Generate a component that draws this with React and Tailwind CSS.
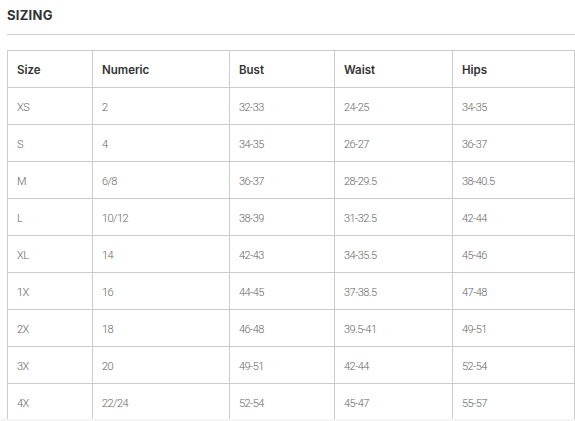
const rows = [
  ['XS', '2', '32-33', '24-25', '34-35'],
  ['S', '4', '34-35', '26-27', '36-37'],
  ['M', '6/8', '36-37', '28-29.5', '38-40.5'],
  ['L', '10/12', '38-39', '31-32.5', '42-44'],
  ['XL', '14', '42-43', '34-35.5', '45-46'],
  ['1X', '16', '44-45', '37-38.5', '47-48'],
  ['2X', '18', '46-48', '39.5-41', '49-51'],
  ['3X', '20', '49-51', '42-44', '52-54'],
  ['4X', '22/24', '52-54', '45-47', '55-57'],
]

const headers = ['Size', 'Numeric', 'Bust', 'Waist', 'Hips']

export default function App() {
  return (
    <div className="h-[421px] bg-[#f4f4f4] overflow-hidden" style={{ fontFamily: 'Roboto, "Liberation Sans", sans-serif' }}>
      <div className="h-[419px] bg-white overflow-hidden pl-[7px]">
        <div className="h-[34px] pt-[6px] text-[13px] font-bold tracking-[0.02em] text-[#333]" style={{ fontFamily: 'Inter, sans-serif' }}>
          SIZING
        </div>
        <div className="h-px bg-[#cfcfcf]" />
        <div className="mt-[15px] grid grid-cols-[85px_137px_105px_118px_122px] border-l border-t border-[#cccccc]">
          {headers.map((h) => (
            <div
              key={h}
              className="h-[37px] flex items-center pl-[9px] pt-[3px] border-r border-b border-[#cccccc] text-[11.5px] font-semibold text-[#333]"
              style={{ fontFamily: 'Inter, sans-serif' }}
            >
              {h}
            </div>
          ))}
          {rows.map((r) =>
            r.map((v, i) => (
              <div
                key={r[0] + i}
                className="h-[37px] flex items-center pl-[9px] pt-[5px] border-r border-b border-[#cccccc] text-[11px] font-light tracking-[-0.05em] text-[#666]"
              >
                {v}
              </div>
            ))
          )}
        </div>
      </div>
    </div>
  )
}
